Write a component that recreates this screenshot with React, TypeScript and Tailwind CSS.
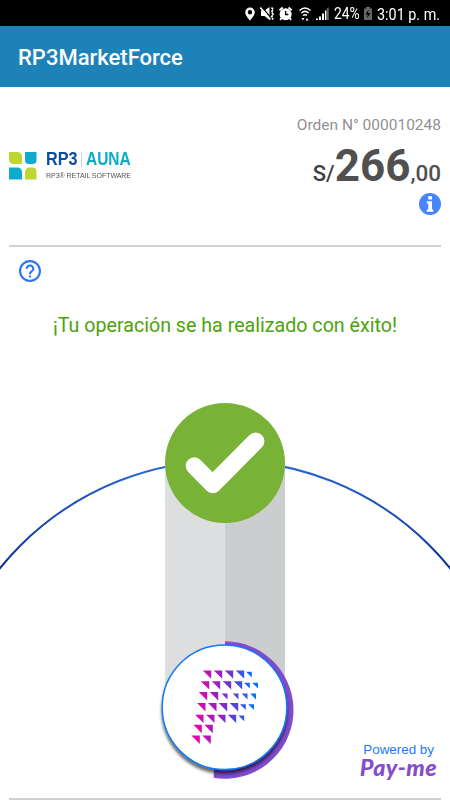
const LARGE = 8.4;
const SMALL = 5.8;

// right edge of every triangle, row by row
const LOGO_ROWS = [
  { y: 670.4, large: [211.2, 222.2, 233.2, 244.2], smallY: 671.8, small: [251.8] },
  { y: 681.2, large: [209.2, 220.2, 231.2, 242.2], smallY: 682.8, small: [249.8, 258] },
  { y: 692, large: [207.2, 218.2], smallY: 693.6, small: [227.5, 238.5, 247.5, 256] },
  { y: 703, large: [205.5, 216.5, 227.2, 238.2], smallY: 704.2, small: [245.8, 254] },
  { y: 714.7, large: [203.5, 214.5, 225.5, 236.2], smallY: 715.4, small: [244.2] },
  { y: 724.8, large: [201.8, 212.8], smallY: 0, small: [] },
  { y: 735.5, large: [199.8, 210.8], smallY: 0, small: [] },
];

function triangle(right: number, top: number, size: number) {
  return `M${right - size} ${top}H${right}V${top + size}Z`;
}

function PayMark() {
  const d = LOGO_ROWS.map((row) =>
    [
      ...row.large.map((x) => triangle(x, row.y, LARGE)),
      ...row.small.map((x) => triangle(x, row.smallY, SMALL)),
    ].join("")
  ).join("");

  return <path d={d} fill="url(#mark)" />;
}

function StatusBar() {
  return (
    <div className="flex h-[26px] shrink-0 items-center bg-black pl-[244px] text-white">
      <svg width="88" height="26" viewBox="244 0 88 26" className="shrink-0">
        <path
          fillRule="evenodd"
          d="M250 7.5a4.8 4.8 0 0 0-4.8 4.8c0 3.4 4.8 8.2 4.8 8.2s4.8-4.8 4.8-8.2A4.8 4.8 0 0 0 250 7.5Zm0 2.6a2.2 2.2 0 1 1 0 4.4 2.2 2.2 0 0 1 0-4.4Z"
          fill="white"
        />
        <path d="M261 10.5h3.5l5-3.5v13l-5-4H261Z" fill="white" />
        <path d="M261.5 6.5l10 12" stroke="black" strokeWidth="1.2" />
        <path d="M260.3 7.5l10 12" stroke="white" strokeWidth="1.6" />
        <path
          d="M271.5 7.5l1.7 2-1.7 2.5 1.7 2.5-1.7 2.5 1.7 2.5"
          stroke="white"
          strokeWidth="1.7"
          fill="none"
          strokeDasharray="2.4 0.8"
        />
        <circle cx="285.6" cy="14.2" r="6" fill="white" />
        <path
          d="M279.5 10.3l3.2-2.8M291.7 10.3l-3.2-2.8M281.5 18l-1.3 2M289.7 18l1.3 2"
          stroke="white"
          strokeWidth="1.8"
        />
        <path d="M285.6 11v3.5h2.8" stroke="black" strokeWidth="1.3" fill="none" />
        <g stroke="white" fill="none" strokeWidth="1.5">
          <path d="M299.5 10.5q5.5-5 11 0" />
          <path d="M301.3 13q3.7-3.2 7.4 0" />
          <path d="M303 15.5q2-1.6 4 0" />
        </g>
        <path d="M301.5 18h3l-1.5 2.5ZM305.5 20.5l1.5-2.5 1.5 2.5Z" fill="white" />
        <path d="M316 18.5h2V20h-2ZM319 16.5h2V20h-2ZM322 13.5h2V20h-2ZM325 10.5h1.5V20H325Z" fill="white" />
        <path d="M326.8 8.5l2-1.2V20h-2Z" fill="#666" />
      </svg>
      <span className="ml-[2px] w-[29px] origin-left scale-x-[0.84] pt-[2px] text-[16.5px] leading-[24px]">
        24%
      </span>
      <svg width="10" height="26" viewBox="0 0 10 26" className="shrink-0">
        <path d="M3 7h4v1.5h2V20H1V8.5h2Z" fill="#666" />
        <path d="M5.5 9.5L2.5 14.5h2.2l-.7 4 3.5-5.5H5Z" fill="black" />
      </svg>
      <span className="ml-[4px] origin-left scale-x-[0.845] whitespace-nowrap pt-[2px] text-[17px] leading-[24px]">
        3:01 p. m.
      </span>
    </div>
  );
}

function BrandLogo() {
  return (
    <div className="flex items-start">
      <svg width="28" height="28" viewBox="0 0 28 28" className="mt-[3px]">
        <path d="M0 0h8.5a4.5 4.5 0 0 1 4.5 4.5V12H4.5A4.5 4.5 0 0 1 0 7.5Z" fill="#bdd630" />
        <path d="M16 0h11.5v8A4 4 0 0 1 23.5 12H20a4 4 0 0 1-4-4Z" fill="#0dabcc" />
        <path d="M0 15.5h8.5A4.5 4.5 0 0 1 13 20v7.5H0Z" fill="#0dabcc" />
        <path d="M20.5 15.5h3a4 4 0 0 1 4 4v8H16V20a4.5 4.5 0 0 1 4.5-4.5Z" fill="#bdd630" />
      </svg>
      <div className="ml-[9px] font-['Liberation_Sans',sans-serif]">
        <div className="flex h-[20px] items-center whitespace-nowrap text-[18px] font-bold leading-[20px]">
          <span className="w-[35px] origin-left scale-x-[0.9] text-[#0a4da0]">RP3</span>
          <span className="mr-[4px] h-[15px] w-px bg-[#c4dbe6]" />
          <span className="w-[45px] origin-left scale-x-[0.86] text-[#0dabcc]">AUNA</span>
        </div>
        <div className="mt-[2px] w-[84px] origin-left scale-x-[0.885] whitespace-nowrap text-[8px] leading-[9px] tracking-[-0.1px] text-[#555]">
          RP3® RETAIL SOFTWARE
        </div>
      </div>
    </div>
  );
}

function Confirmation() {
  return (
    <svg width="450" height="402" viewBox="0 395 450 402" className="block">
      <defs>
        <linearGradient id="mark" gradientUnits="userSpaceOnUse" x1="192" y1="0" x2="254" y2="0">
          <stop offset="0" stopColor="#f500a5" />
          <stop offset="0.45" stopColor="#9420c4" />
          <stop offset="0.75" stopColor="#4a4adf" />
          <stop offset="1" stopColor="#0075ff" />
        </linearGradient>
        <linearGradient id="orbit" x1="0" y1="0" x2="0" y2="1">
          <stop offset="0" stopColor="#2b6ad8" />
          <stop offset="0.2" stopColor="#0a2c90" />
        </linearGradient>
        <filter id="shadow" x="-20%" y="-20%" width="140%" height="140%">
          <feDropShadow dx="0" dy="3.5" stdDeviation="1.6" floodColor="#000" floodOpacity="0.6" />
        </filter>
        <clipPath id="top">
          <rect x="0" y="395" width="450" height="176" />
        </clipPath>
      </defs>
      <circle cx="225" cy="750" r="289.3" fill="none" stroke="url(#orbit)" strokeWidth="2" clipPath="url(#top)" />
      <path d="M165 463h60v247h-60Z" fill="#dcdee0" />
      <path d="M225 463h60v247h-60Z" fill="#cccdcf" />
      <circle cx="225" cy="463" r="60" fill="#78b338" />
      <path
        d="M194.4 466l18.3 18.5 43-43.3"
        fill="none"
        stroke="white"
        strokeWidth="17.4"
        strokeLinecap="round"
        strokeLinejoin="round"
      />
      <path d="M225 641.3A68.7 68.7 0 1 1 213.7 777.8L215 710H225Z" fill="#804bcc" />
      <circle cx="224.5" cy="707.3" r="62.3" fill="white" stroke="#1479f2" strokeWidth="1.5" filter="url(#shadow)" />
      <PayMark />
    </svg>
  );
}

export default function App() {
  return (
    <div className="flex h-[800px] w-[450px] flex-col overflow-hidden bg-white font-[Roboto,sans-serif]">
      <StatusBar />
      <header className="flex h-[61px] shrink-0 items-center bg-[#1c82b8] px-[18px] pt-[2px]">
        <h1 className="text-[22px] font-medium text-white">RP3MarketForce</h1>
      </header>

      <main className="flex flex-col">
        <section className="mx-[9px] flex h-40 justify-between border-b-2 border-[#d0d0d0]">
          <div className="pt-[62px]">
            <BrandLogo />
          </div>
          <div className="flex flex-col items-end pt-[28px]">
            <p className="text-[15.5px] leading-[20px] text-[#938f93]">Orden N° 000010248</p>
            <p className="mt-[8px] flex h-[46px] items-baseline font-medium leading-[46px] text-[#505050]">
              <span className="text-[22px] text-[#3f3f3f]">S/</span>
              <span className="text-[44px] font-bold">266</span>
              <span className="text-[22.5px]">,00</span>
            </p>
            <svg width="22" height="22" viewBox="0 0 22 22" className="mt-[4px]">
              <circle cx="11" cy="11" r="11" fill="#4785fa" />
              <path d="M9.2 3.2h3.8v3.3H9.2ZM7.8 8.3H13v8.2h1.3v2.2H7.8v-2.2h1.5v-6H7.8Z" fill="white" />
            </svg>
          </div>
        </section>

        <section className="flex h-[148px] flex-col">
          <svg width="24" height="24" viewBox="0 0 24 24" className="ml-[18px] mt-[12px]">
            <path
              d="M11 18h2v-2h-2v2zm1-16C6.48 2 2 6.48 2 12s4.48 10 10 10 10-4.48 10-10S17.52 2 12 2zm0 18c-4.41 0-8-3.59-8-8s3.59-8 8-8 8 3.59 8 8-3.59 8-8 8zm0-14c-2.21 0-4 1.79-4 4h2c0-1.1.9-2 2-2s2 .9 2 2c0 2-3 1.75-3 5h2c0-2.25 3-2.5 3-5 0-2.21-1.79-4-4-4z"
              fill="#2d75f5"
              transform="translate(12 12) scale(1.1) translate(-12 -12)"
            />
          </svg>
          <p className="mt-[30px] text-center text-[19.65px] leading-[26px] text-[#4ca30d]">
            ¡Tu operación se ha realizado con éxito!
          </p>
        </section>

        <div className="relative">
          <Confirmation />
          <div className="absolute bottom-[20px] right-[13px] flex flex-col items-end">
            <span className="mr-[3px] font-['Liberation_Sans',sans-serif] text-[13.4px] leading-[14px] text-[#1c7af5]">
              Powered by
            </span>
            <span className="font-[Lato,sans-serif] text-[23.3px] font-black italic leading-[20px] tracking-[0.4px] text-[#834dcc]">
              Pay-me
            </span>
          </div>
        </div>
        <div className="mx-[9px] mt-px h-[2px] bg-[#d0d0d0]" />
      </main>
    </div>
  );
}
